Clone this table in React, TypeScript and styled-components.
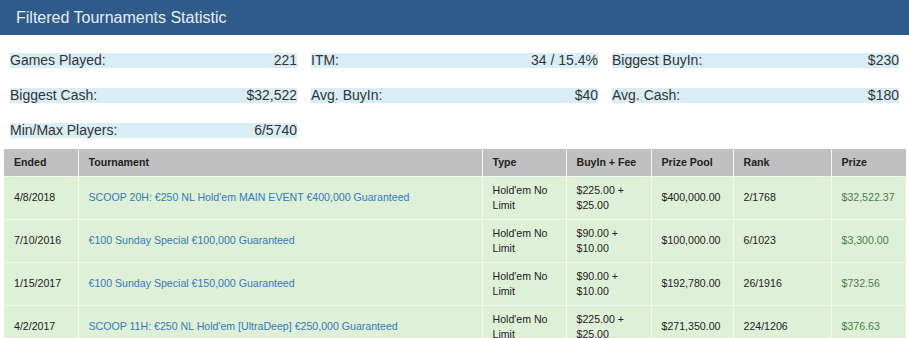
import React, { FC } from "react";
import styled, { createGlobalStyle } from "styled-components";

const colors = {
  navy: "#2f5b8b",
  title: "#e9edf2",
  info: "#d9edf7",
  text: "#333333",
  dark: "#222222",
  headGrey: "#c0c0c0",
  success: "#dff0d8",
  cellLine: "#f3f9f0",
  link: "#337ab7",
  prize: "#4a7d4a"
};

const GlobalStyle = createGlobalStyle`
  * { box-sizing: border-box; }
  body {
    margin: 0;
    background: #ffffff;
    font-family: "Liberation Sans", Arial, sans-serif;
    color: ${colors.text};
  }
`;

const Panel = styled.section`
  width: 909px;
`;

const PanelHeading = styled.h1`
  margin: 0;
  height: 35px;
  padding-left: 16px;
  display: flex;
  align-items: center;
  background-color: ${colors.navy};
  color: ${colors.title};
  font-size: 16px;
  font-weight: 400;
`;

const StatsGrid = styled.div`
  display: grid;
  grid-template-columns: repeat(3, 287px);
  column-gap: 14px;
  row-gap: 20px;
  padding: 18px 0 0 10px;
`;

const Stat = styled.div`
  display: flex;
  justify-content: space-between;
  height: 15px;
  line-height: 15px;
  font-size: 14px;
  background-color: ${colors.info};
  color: ${colors.text};
`;

const Table = styled.table`
  margin: 11px 0 0 4px;
  width: 902px;
  table-layout: fixed;
  border-collapse: collapse;
  font-size: 10.6px;
  line-height: 15px;
`;

const HeadCell = styled.th<{ w: number }>`
  width: ${props => props.w}px;
  height: 27px;
  padding: 0 10px;
  text-align: left;
  font-weight: 700;
  color: ${colors.dark};
  background-color: ${colors.headGrey};
  border-left: 1px solid #f4f4f4;
  &:first-child {
    border-left: none;
  }
`;

const Row = styled.tr`
  background-color: ${colors.success};
  border-top: 1px solid ${colors.cellLine};
`;

const Cell = styled.td<{ tone?: "link" | "prize" }>`
  height: 43px;
  padding: 6px 10px;
  vertical-align: middle;
  border-left: 1px solid ${colors.cellLine};
  color: ${props =>
    props.tone === "link"
      ? colors.link
      : props.tone === "prize"
      ? colors.prize
      : colors.dark};
  &:first-child {
    border-left: none;
  }
`;

const TournamentLink = styled.a`
  color: inherit;
  text-decoration: none;
`;

const stats = [
  ["Games Played:", "221"],
  ["ITM:", "34 / 15.4%"],
  ["Biggest BuyIn:", "$230"],
  ["Biggest Cash:", "$32,522"],
  ["Avg. BuyIn:", "$40"],
  ["Avg. Cash:", "$180"],
  ["Min/Max Players:", "6/5740"]
];

const columns: [string, number][] = [
  ["Ended", 74],
  ["Tournament", 404],
  ["Type", 84],
  ["BuyIn + Fee", 85],
  ["Prize Pool", 82],
  ["Rank", 98],
  ["Prize", 75]
];

interface Tournament {
  ended: string;
  name: string;
  type: string;
  buyIn: string;
  fee: string;
  pool: string;
  rank: string;
  prize: string;
}

const tournaments: Tournament[] = [
  {
    ended: "4/8/2018",
    name: "SCOOP 20H: €250 NL Hold'em MAIN EVENT €400,000 Guaranteed",
    type: "Hold'em No Limit",
    buyIn: "$225.00",
    fee: "$25.00",
    pool: "$400,000.00",
    rank: "2/1768",
    prize: "$32,522.37"
  },
  {
    ended: "7/10/2016",
    name: "€100 Sunday Special €100,000 Guaranteed",
    type: "Hold'em No Limit",
    buyIn: "$90.00",
    fee: "$10.00",
    pool: "$100,000.00",
    rank: "6/1023",
    prize: "$3,300.00"
  },
  {
    ended: "1/15/2017",
    name: "€100 Sunday Special €150,000 Guaranteed",
    type: "Hold'em No Limit",
    buyIn: "$90.00",
    fee: "$10.00",
    pool: "$192,780.00",
    rank: "26/1916",
    prize: "$732.56"
  },
  {
    ended: "4/2/2017",
    name: "SCOOP 11H: €250 NL Hold'em [UltraDeep] €250,000 Guaranteed",
    type: "Hold'em No Limit",
    buyIn: "$225.00",
    fee: "$25.00",
    pool: "$271,350.00",
    rank: "224/1206",
    prize: "$376.63"
  }
];

const App: FC = () => {
  return (
    <>
      <GlobalStyle />
      <Panel>
        <PanelHeading>Filtered Tournaments Statistic</PanelHeading>
        <StatsGrid>
          {stats.map(([label, value]) => (
            <Stat key={label}>
              <span>{label}</span>
              <span>{value}</span>
            </Stat>
          ))}
        </StatsGrid>
        <Table>
          <thead>
            <tr>
              {columns.map(([title, width]) => (
                <HeadCell key={title} w={width}>
                  {title}
                </HeadCell>
              ))}
            </tr>
          </thead>
          <tbody>
            {tournaments.map(t => (
              <Row key={t.name}>
                <Cell>{t.ended}</Cell>
                <Cell tone="link">
                  <TournamentLink href="#">{t.name}</TournamentLink>
                </Cell>
                <Cell>{t.type}</Cell>
                <Cell>
                  {t.buyIn} +<br />
                  {t.fee}
                </Cell>
                <Cell>{t.pool}</Cell>
                <Cell>{t.rank}</Cell>
                <Cell tone="prize">{t.prize}</Cell>
              </Row>
            ))}
          </tbody>
        </Table>
      </Panel>
    </>
  );
};

export default App;
